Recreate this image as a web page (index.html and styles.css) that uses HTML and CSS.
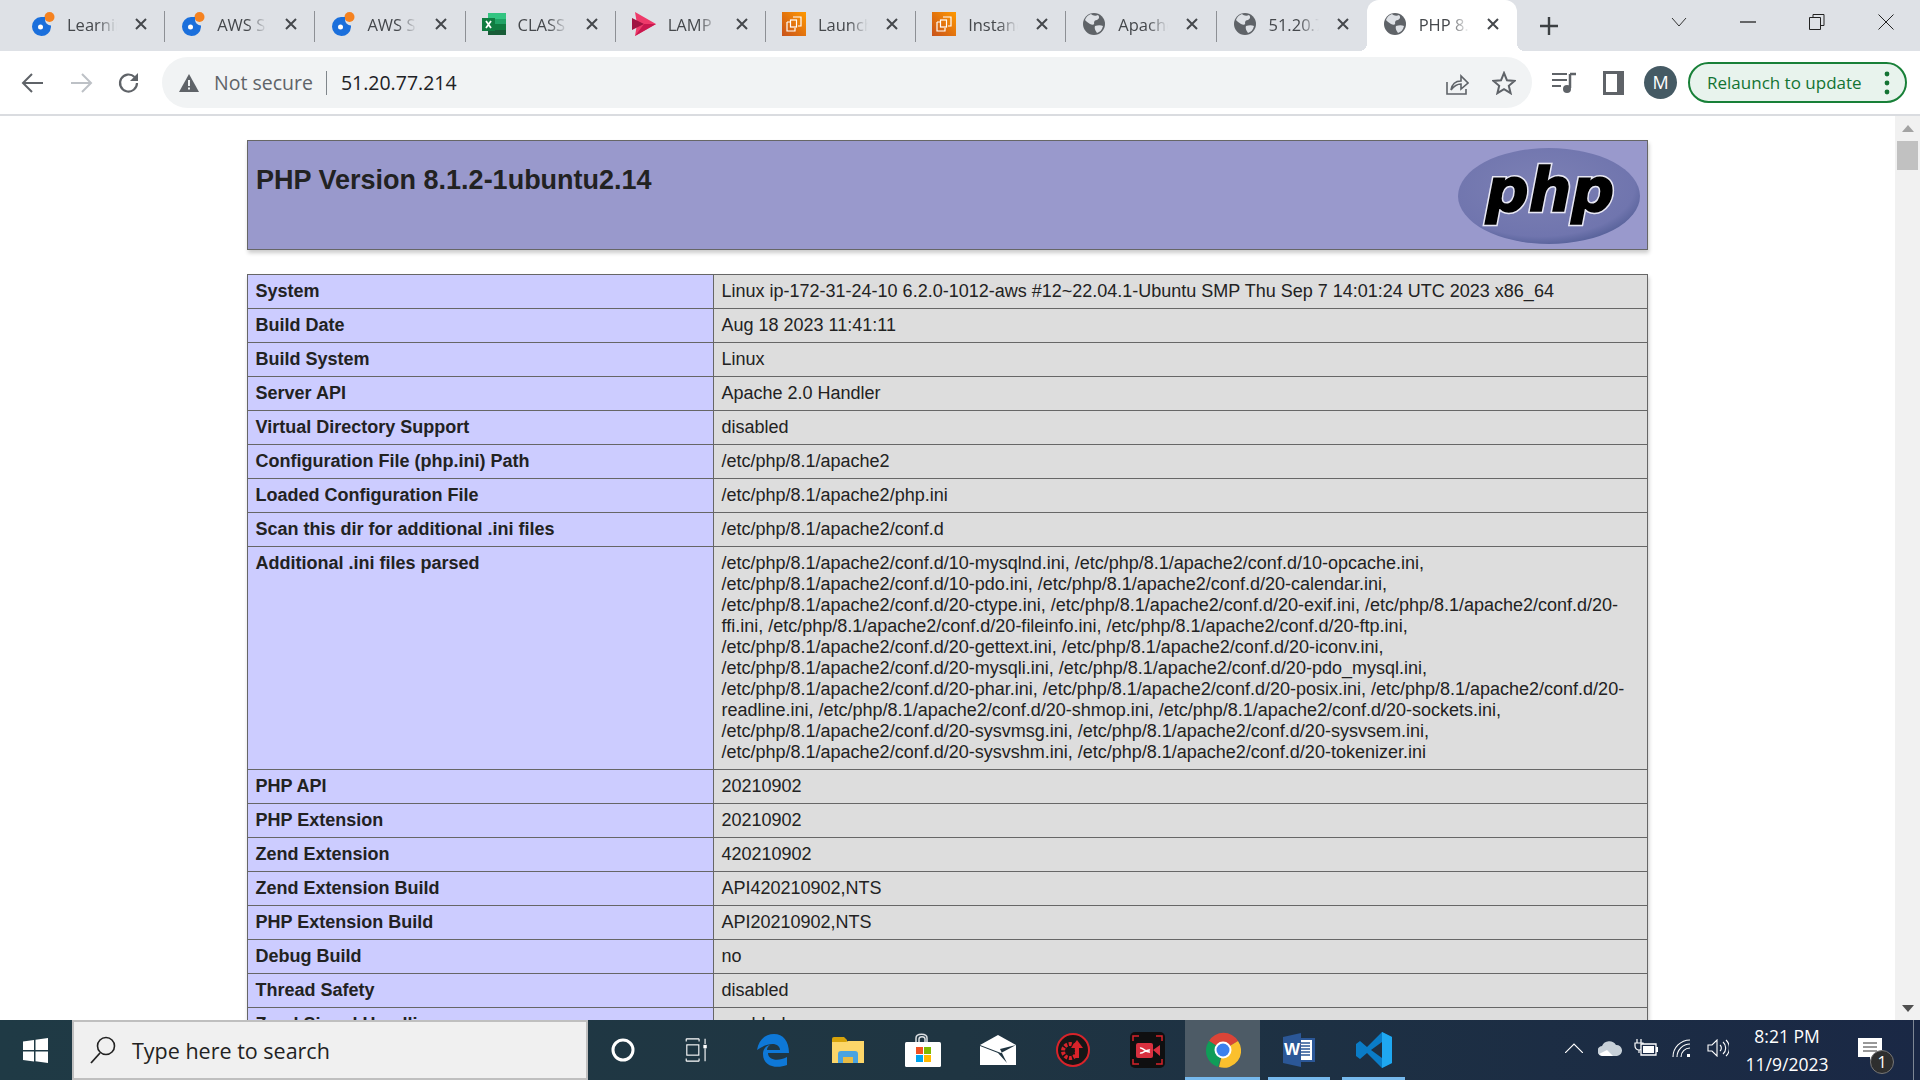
FILE: index.html
```html
<!DOCTYPE html>
<html>
<head>
<meta charset="utf-8">
<title>PHP 8.1.2-1ubuntu2.14 - phpinfo()</title>
<link rel="stylesheet" href="styles.css">
</head>
<body>

<svg class="defs" width="0" height="0">
	<defs>
		<linearGradient id="awsGrad" x1="0" y1="1" x2="1" y2="0">
			<stop offset="0" stop-color="#c8511b"/>
			<stop offset="1" stop-color="#ff9900"/>
		</linearGradient>
	</defs>
	<symbol id="fav-learn" viewBox="0 0 24 24">
		<circle cx="18.500" cy="5" r="5" fill="#f58220"/>
		<path d="M10 5a9.500 9.500 0 1 0 10 10v-1.500a6 6 0 0 1-6-6V5z" fill="#1a6fdc"/>
		<circle cx="9.500" cy="15" r="2.500" fill="#fff"/>
	</symbol>
	<symbol id="fav-aws" viewBox="0 0 24 24">
		<rect width="24" height="24" fill="url(#awsGrad)"/>
		<g fill="none" stroke="#fff" stroke-width="1.200">
			<path d="M11 5h8v9h-3M5 10h3M5 10v9h8v-3"/>
			<rect x="8.500" y="8" width="6" height="7"/>
		</g>
	</symbol>
	<symbol id="fav-globe" viewBox="0 0 24 24">
		<circle cx="12" cy="12" r="11" fill="#5f6368"/>
		<path d="M9 2c2 2 5 2 7 1c2 2 1 4-1 5c-2 0-3 1-3 3c1 2-2 2-4 1c-2-1-4-3-5-4c1-3 3-5 6-6zM13 14c3-1 6-1 8 0c-1 4-3 6-6 7c-1-2-3-4-2-7z" fill="#dee1e6"/>
	</symbol>
	<symbol id="tab-x" viewBox="0 0 14 14">
		<path d="M2 2l10 10M12 2L2 12" stroke="#45484c" stroke-width="2" fill="none"/>
	</symbol>
</svg>

<div class="tabstrip">
	<div class="tab">
		<svg class="fav"><use href="#fav-learn"/></svg>
		<span class="tabTitle">Learning</span>
		<svg class="tabClose"><use href="#tab-x"/></svg>
	</div>
	<div class="tab">
		<svg class="fav"><use href="#fav-learn"/></svg>
		<span class="tabTitle">AWS Skill</span>
		<svg class="tabClose"><use href="#tab-x"/></svg>
	</div>
	<div class="tab">
		<svg class="fav"><use href="#fav-learn"/></svg>
		<span class="tabTitle">AWS Skill</span>
		<svg class="tabClose"><use href="#tab-x"/></svg>
	</div>
	<div class="tab">
		<svg class="fav" viewBox="0 0 24 22">
			<rect x="6" y="0" width="18" height="22" fill="#21a366"/>
			<rect x="6" y="0" width="18" height="6" fill="#33c481"/>
			<rect x="6" y="11" width="18" height="6" fill="#107c41"/>
			<rect x="6" y="17" width="18" height="5" fill="#185c37"/>
			<rect x="0" y="5" width="13" height="13" fill="#107c41"/>
			<path d="M4 8l5 7M9 8l-5 7" stroke="#fff" stroke-width="1.800"/>
		</svg>
		<span class="tabTitle">CLASS</span>
		<svg class="tabClose"><use href="#tab-x"/></svg>
	</div>
	<div class="tab">
		<svg class="fav" viewBox="0 0 24 24">
			<path d="M3 0l21 12l-21 12l2-12z" fill="#ee3a6a"/>
			<path d="M0 6l12 6l-12 6z" fill="#a01442"/>
			<path d="M3 24l21-12h-12z" fill="#c9184f"/>
		</svg>
		<span class="tabTitle">LAMP</span>
		<svg class="tabClose"><use href="#tab-x"/></svg>
	</div>
	<div class="tab">
		<svg class="fav"><use href="#fav-aws"/></svg>
		<span class="tabTitle">Launch</span>
		<svg class="tabClose"><use href="#tab-x"/></svg>
	</div>
	<div class="tab">
		<svg class="fav"><use href="#fav-aws"/></svg>
		<span class="tabTitle">Instance</span>
		<svg class="tabClose"><use href="#tab-x"/></svg>
	</div>
	<div class="tab">
		<svg class="fav"><use href="#fav-globe"/></svg>
		<span class="tabTitle">Apache</span>
		<svg class="tabClose"><use href="#tab-x"/></svg>
	</div>
	<div class="tab noSep">
		<svg class="fav"><use href="#fav-globe"/></svg>
		<span class="tabTitle">51.20.77</span>
		<svg class="tabClose"><use href="#tab-x"/></svg>
	</div>
	<div class="tab active">
		<svg class="fav"><use href="#fav-globe"/></svg>
		<span class="tabTitle">PHP 8.1</span>
		<svg class="tabClose"><use href="#tab-x"/></svg>
	</div>
	<svg class="newTab" width="20" height="20" viewBox="0 0 20 20"><path d="M10 1v18M1 10h18" stroke="#3c4043" stroke-width="2.400"/></svg>
	<div class="winBtns">
		<svg width="16" height="10" viewBox="0 0 16 10"><path d="M1 1l7 8l7-8" stroke="#333" fill="none"/></svg>
		<svg width="16" height="2" viewBox="0 0 16 2"><path d="M0 1h16" stroke="#222" stroke-width="1.300"/></svg>
		<svg width="16" height="16" viewBox="0 0 16 16"><path d="M4 3.500V.5h11v11h-3M.5 3.500h11v12H.5z" stroke="#222" fill="none"/></svg>
		<svg width="16" height="16" viewBox="0 0 16 16"><path d="M.5.5l15 15M15.500.5l-15 15" stroke="#222" fill="none"/></svg>
	</div>
</div>

<div class="toolbar">
	<svg class="navBtn" width="24" height="24" viewBox="0 0 24 24"><path d="M22 12H3M11 3l-9 9l9 9" stroke="#5f6368" stroke-width="2" fill="none"/></svg>
	<svg class="navBtn" width="24" height="24" viewBox="0 0 24 24"><path d="M2 12h19M13 3l9 9l-9 9" stroke="#bdc1c6" stroke-width="2" fill="none"/></svg>
	<svg class="navBtn" width="24" height="24" viewBox="0 0 24 24"><path d="M20 12a8.500 8.500 0 1 1-2.500-6" stroke="#5f6368" stroke-width="2.200" fill="none"/><path d="M21 2v8h-8z" fill="#5f6368"/></svg>
	<div class="omnibox">
		<svg width="20" height="18" viewBox="0 0 20 18"><path d="M10 0l10 18H0z" fill="#5f6368"/><path d="M10 6v6M10 13.500v2" stroke="#f1f3f4" stroke-width="2"/></svg>
		<span class="notSecure">Not secure</span>
		<span class="urlSep"></span>
		<span class="url">51.20.77.214</span>
		<svg class="share" width="24" height="24" viewBox="0 0 24 24"><path d="M2 11v12h19v-5" stroke="#5f6368" stroke-width="1.600" fill="none"/><path d="M6 19c1-6 5-9 10-9V5l7 7l-7 6v-5c-4 0-7 2-10 6z" stroke="#5f6368" stroke-width="1.600" fill="none"/></svg>
		<svg width="24" height="24" viewBox="0 0 24 24"><path d="M12 2l3 7.300l7.500.6l-5.700 4.900l1.800 7.400L12 18.200L5.400 22.200l1.800-7.400L1.500 9.900L9 9.300z" stroke="#5f6368" stroke-width="2" fill="none"/></svg>
	</div>
	<svg class="music" width="24" height="22" viewBox="0 0 24 22"><path d="M0 2h15M0 8h15M0 14h9" stroke="#5f6368" stroke-width="2"/><path d="M18 2h6M18 2v14" stroke="#5f6368" stroke-width="2.500"/><circle cx="15" cy="17" r="4" fill="#5f6368"/></svg>
	<svg class="panel" width="21" height="24" viewBox="0 0 21 24"><path d="M0 0h21v24H0z" fill="#5f6368"/><path d="M3 3h11v18H3z" fill="#fff"/></svg>
	<div class="avatar">M</div>
	<div class="relaunch">
		<span>Relaunch to update</span>
		<svg width="6" height="24" viewBox="0 0 6 24"><circle cx="3" cy="3" r="2.400" fill="#137333"/><circle cx="3" cy="12" r="2.400" fill="#137333"/><circle cx="3" cy="21" r="2.400" fill="#137333"/></svg>
	</div>
</div>

<div class="viewport">
	<div class="page">
		<div class="phpHead">
			<h1>PHP Version 8.1.2-1ubuntu2.14</h1>
			<svg class="phpLogo" width="184" height="98" viewBox="0 0 184 98">
				<defs>
					<radialGradient id="logoGrad" cx="45%" cy="40%" r="65%">
						<stop offset="0" stop-color="#7c80b4"/>
						<stop offset="0.8" stop-color="#7075ae"/>
						<stop offset="1" stop-color="#4f5b93"/>
					</radialGradient>
				</defs>
				<ellipse cx="92" cy="49" rx="91" ry="48" fill="url(#logoGrad)"/>
				<text class="logoText logoHalo" x="93" y="64" text-anchor="middle">php</text>
				<text class="logoText" x="93" y="64" text-anchor="middle">php</text>
			</svg>
		</div>
		<table class="info">
			<tr><td class="key">System</td><td class="val">Linux ip-172-31-24-10 6.2.0-1012-aws #12~22.04.1-Ubuntu SMP Thu Sep 7 14:01:24 UTC 2023 x86_64</td></tr>
			<tr><td class="key">Build Date</td><td class="val">Aug 18 2023 11:41:11</td></tr>
			<tr><td class="key">Build System</td><td class="val">Linux</td></tr>
			<tr><td class="key">Server API</td><td class="val">Apache 2.0 Handler</td></tr>
			<tr><td class="key">Virtual Directory Support</td><td class="val">disabled</td></tr>
			<tr><td class="key">Configuration File (php.ini) Path</td><td class="val">/etc/php/8.1/apache2</td></tr>
			<tr><td class="key">Loaded Configuration File</td><td class="val">/etc/php/8.1/apache2/php.ini</td></tr>
			<tr><td class="key">Scan this dir for additional .ini files</td><td class="val">/etc/php/8.1/apache2/conf.d</td></tr>
			<tr><td class="key">Additional .ini files parsed</td><td class="val">/etc/php/8.1/apache2/conf.d/10-mysqlnd.ini, /etc/php/8.1/apache2/conf.d/10-opcache.ini, /etc/php/8.1/apache2/conf.d/10-pdo.ini, /etc/php/8.1/apache2/conf.d/20-calendar.ini, /etc/php/8.1/apache2/conf.d/20-ctype.ini, /etc/php/8.1/apache2/conf.d/20-exif.ini, /etc/php/8.1/apache2/conf.d/20-ffi.ini, /etc/php/8.1/apache2/conf.d/20-fileinfo.ini, /etc/php/8.1/apache2/conf.d/20-ftp.ini, /etc/php/8.1/apache2/conf.d/20-gettext.ini, /etc/php/8.1/apache2/conf.d/20-iconv.ini, /etc/php/8.1/apache2/conf.d/20-mysqli.ini, /etc/php/8.1/apache2/conf.d/20-pdo_mysql.ini, /etc/php/8.1/apache2/conf.d/20-phar.ini, /etc/php/8.1/apache2/conf.d/20-posix.ini, /etc/php/8.1/apache2/conf.d/20-readline.ini, /etc/php/8.1/apache2/conf.d/20-shmop.ini, /etc/php/8.1/apache2/conf.d/20-sockets.ini, /etc/php/8.1/apache2/conf.d/20-sysvmsg.ini, /etc/php/8.1/apache2/conf.d/20-sysvsem.ini, /etc/php/8.1/apache2/conf.d/20-sysvshm.ini, /etc/php/8.1/apache2/conf.d/20-tokenizer.ini</td></tr>
			<tr><td class="key">PHP API</td><td class="val">20210902</td></tr>
			<tr><td class="key">PHP Extension</td><td class="val">20210902</td></tr>
			<tr><td class="key">Zend Extension</td><td class="val">420210902</td></tr>
			<tr><td class="key">Zend Extension Build</td><td class="val">API420210902,NTS</td></tr>
			<tr><td class="key">PHP Extension Build</td><td class="val">API20210902,NTS</td></tr>
			<tr><td class="key">Debug Build</td><td class="val">no</td></tr>
			<tr><td class="key">Thread Safety</td><td class="val">disabled</td></tr>
			<tr><td class="key">Zend Signal Handling</td><td class="val">enabled</td></tr>
		</table>
	</div>
	<div class="scrollbar">
		<span class="arrowUp"></span>
		<span class="thumb"></span>
		<span class="arrowDown"></span>
	</div>
</div>

<div class="taskbar">
	<svg class="winLogo" width="25" height="25" viewBox="0 0 25 25"><path d="M0 3.500l11-1.500v10H0zM12.500 1.800L25 0v12H12.500zM0 13.500h11v10L0 22zM12.500 13.500H25V25l-12.500-1.800z" fill="#fff"/></svg>
	<div class="search">
		<svg width="26" height="30" viewBox="0 0 26 30"><circle cx="16" cy="11" r="8.500" stroke="#222" stroke-width="1.600" fill="none"/><path d="M10 18L1 28" stroke="#222" stroke-width="1.800"/></svg>
		<span>Type here to search</span>
	</div>
	<div class="apps">
		<div class="app"><svg width="24" height="24" viewBox="0 0 24 24"><circle cx="12" cy="12" r="10" stroke="#fff" stroke-width="3" fill="none"/></svg></div>
		<div class="app taskView"><svg width="23" height="24" viewBox="0 0 24 28"><path d="M0 1h15M0 27h15M0 1v3M15 1v3M0 27v-3M15 27v-3" stroke="#fff" stroke-width="1.300" fill="none"/><rect x="0.700" y="8" width="14" height="12" stroke="#fff" stroke-width="1.300" fill="none"/><path d="M22 1v6M22 12v15" stroke="#fff" stroke-width="1.300"/><rect x="20" y="8" width="4" height="4" fill="#fff"/></svg></div>
		<div class="app"><svg width="32" height="33" viewBox="0 0 32 33"><path d="M0 16C2 5 9 0 17 0c9 0 15 7 15 19H11c0 7 10 9 19 4v8c-10 4-24 2-24-11c0-4 2-8 7-9c-2 1-3 3-3 5h13c0-6-9-10-23 0z" fill="#0e78d7"/></svg></div>
		<div class="app"><svg width="32" height="28" viewBox="0 0 32 28"><path d="M0 3a2 2 0 0 1 2-2h10l3 3v22H0z" fill="#d7a30a"/><path d="M0 6h14l2-1h16v22H0z" fill="#fcd669"/><path d="M6 27V18a3 3 0 0 1 3-3h14a3 3 0 0 1 3 3v9h-5v-6H11v6z" fill="#4aa3e0"/><path d="M11 21h10v6H11z" fill="#e8bc45"/></svg></div>
		<div class="app"><svg width="36" height="34" viewBox="0 0 36 34"><path d="M11 11V5c0-5 11-5 11 0v6M14 11V6c0-3 6-3 6 0v5" stroke="#dcdfe2" stroke-width="1.500" fill="none"/><rect y="9" width="36" height="25" rx="1.500" fill="#fff"/><rect x="11" y="14" width="7" height="7" fill="#f25022"/><rect x="19" y="14" width="7" height="7" fill="#7fba00"/><rect x="11" y="22" width="7" height="7" fill="#00a4ef"/><rect x="19" y="22" width="7" height="7" fill="#ffb900"/></svg></div>
		<div class="app"><svg width="36" height="30" viewBox="0 0 36 30"><path d="M0 10L18 0l18 10v20H0z" fill="#fff"/><path d="M0 10l21 8l15-8l-16 4l7 14l-9-10L0 11z" fill="#1f3440"/></svg></div>
		<div class="app"><svg width="34" height="34" viewBox="0 0 34 34"><circle cx="17" cy="17" r="16" fill="#161616" stroke="#d8232a" stroke-width="2"/><circle cx="14" cy="18" r="7" fill="none" stroke="#d8232a" stroke-width="4" stroke-dasharray="3 1.500"/><path d="M21 7l6 8h-4v10h-4V15h-4z" fill="#d8232a"/></svg></div>
		<div class="app"><svg width="35" height="36" viewBox="0 0 35 36"><rect width="35" height="36" rx="5" fill="#0f0f10"/><path d="M3 9V4h6M26 4h6v5M3 27v5h6M32 27v5h-6" stroke="#d8232a" stroke-width="1.500" fill="none"/><rect x="6" y="11" width="17" height="15" rx="2" fill="#d9303f"/><path d="M23 18l7-5v11z" fill="#d9303f"/><path d="M10 16c3-1 6 5 10 4M10 21c3 1 6-4 10-3" stroke="#fff" stroke-width="1.500" fill="none"/></svg></div>
		<div class="app current"><svg width="36" height="36" viewBox="0 0 36 36"><path d="M18 18L4 9A17 17 0 0 1 33 9z" fill="#db4437"/><path d="M18 18L4 9A17 17 0 0 0 13 35z" fill="#0f9d58"/><path d="M18 18l15-9A17 17 0 0 1 14 35z" fill="#fbc02d"/><circle cx="18" cy="18" r="8.500" fill="#fff"/><circle cx="18" cy="18" r="6.500" fill="#3c80ee"/></svg></div>
		<div class="app open"><svg width="32" height="34" viewBox="0 0 32 34"><path d="M11 5h21v24H11z" fill="#2b5797"/><path d="M14 7h15v20H14z" fill="#fff"/><path d="M17 10h10M17 13h10M17 16h10M17 19h10M17 22h10" stroke="#2b5797" stroke-width="1.500"/><path d="M0 4l18-4v34L0 30z" fill="#2b5797"/><text class="wordW" x="9" y="22" text-anchor="middle">W</text></svg></div>
		<div class="app open"><svg width="36" height="36" viewBox="0 0 36 36"><path d="M26 0l10 5v26l-10 5L11 21l-7 6l-4-3v-12l4-3l7 6z" fill="#0a7cc7"/><path d="M26 0l10 5v26l-10 5z" fill="#1fa8f1"/><path d="M26 10L15 18l11 8z" fill="#1f2f40"/></svg></div>
	</div>
	<div class="tray">
		<div class="trayIcon"><svg width="18" height="10" viewBox="0 0 18 10"><path d="M0 10l9-9l9 9" stroke="#fff" fill="none" stroke-width="1.200"/></svg></div>
		<div class="trayIcon"><svg width="24" height="16" viewBox="0 0 24 16"><path d="M5 16a5 5 0 0 1-1-10a8 8 0 0 1 14-1a5.500 5.500 0 0 1 1 11z" fill="#c7d0d8"/><path d="M1 14l8-4l6 6H4z" fill="#fff"/></svg></div>
		<div class="trayIcon"><svg width="24" height="18" viewBox="0 0 24 18"><path d="M3 0v4M7 0v4M1 4h8v3a4 4 0 0 1-8 0zM5 11v3" stroke="#fff" fill="none" stroke-width="1.200"/><path d="M7 5h15v11H7z" stroke="#fff" stroke-width="1.300" fill="#1b2a45"/><rect x="9" y="7" width="11" height="7" fill="#fff"/><rect x="22" y="8" width="2" height="5" fill="#fff"/></svg></div>
		<div class="trayIcon"><svg width="20" height="18" viewBox="0 0 20 18"><path d="M1 18A17 17 0 0 1 18 1M5 18A13 13 0 0 1 18 5M9 18a9 9 0 0 1 9-9" stroke="#fff" fill="none" stroke-width="1.100"/><rect x="15" y="15" width="3" height="3" fill="#fff"/></svg></div>
		<div class="trayIcon"><svg width="22" height="18" viewBox="0 0 22 18"><path d="M1 6h4l5-5v16l-5-5H1z" stroke="#fff" fill="none" stroke-width="1.100"/><path d="M13 6a4 4 0 0 1 0 6M16 3a8 8 0 0 1 0 12M19 1a11 11 0 0 1 0 16" stroke="#fff" fill="none" stroke-width="1.100"/></svg></div>
	</div>
	<div class="clock">
		<span>8:21 PM</span>
		<span>11/9/2023</span>
	</div>
	<div class="notify">
		<svg width="24" height="24" viewBox="0 0 24 24"><path d="M0 0h24v19H14l-2 4v-4H0z" fill="#fff"/><path d="M5 5h14M5 9h14M5 13h14" stroke="#333" stroke-width="1"/></svg>
		<span class="badge">1</span>
	</div>
</div>

</body>
</html>
```

FILE: styles.css
```css
/* reset start */
html,body{ height:100%; overflow:hidden;}
body{ margin:0; display:flex; flex-direction:column; background:#fff; font-family:"Open Sans","Noto Sans",sans-serif;}
h1{ margin:0;}
.defs{ position:absolute;}
/* reset end */

/* tabs start */
.tabstrip{ height:51px; background:#dee1e6; display:flex; padding-left:15px; flex:none;}
.tab{ width:150.2px; box-sizing:border-box; display:flex; align-items:center; padding:0 14px 3px 16px; position:relative; font-size:16.500px; color:#45484c;}
.tab:after{ content:""; position:absolute; right:0; top:11px; height:31px; width:1px; background:#8d9095;}
.tab.noSep:after{ display:none;}
.tab.active{ background:#fff; border-radius:12px 12px 0 0;}
.tab.active:before,.tab.active:after{ content:""; display:block; position:absolute; bottom:0; top:auto; right:auto; width:8px; height:8px; background:radial-gradient(circle at 0 0,transparent 8px,#fff 8px);}
.tab.active:before{ left:-8px;}
.tab.active:after{ right:-8px; background:radial-gradient(circle at 100% 0,transparent 8px,#fff 8px);}
.fav{ width:24px; height:24px; flex:none;}
.tabTitle{ width:50px; margin-left:12px; white-space:nowrap; overflow:hidden; -webkit-mask-image:linear-gradient(to right,#000 60%,transparent 100%); mask-image:linear-gradient(to right,#000 60%,transparent 100%);}
.tabClose{ width:14px; height:14px; margin-left:17px; flex:none;}
.newTab{ align-self:center; margin:0 0 0 22px; flex:none;}
.winBtns{ margin-left:auto; display:flex; align-items:center; gap:53px; padding:0 26px 8px 0;}
/* tabs end */

/* toolbar start */
.toolbar{ height:65px; box-sizing:border-box; background:#fff; border-bottom:2px solid #dadce0; display:flex; align-items:center; padding:0 13px 0 21px; flex:none;}
.navBtn{ margin-right:24px; flex:none;}
.navBtn:nth-child(3){ margin-right:21px;}
.omnibox{ width:1370px; height:51px; box-sizing:border-box; border-radius:26px; background:#f1f3f4; display:flex; align-items:center; padding:0 16px 0 17px; flex:none;}
.notSecure{ margin-left:15px; font-size:19.500px; color:#5f6368;}
.urlSep{ width:1px; height:24px; background:#80868b; margin:0 14px 0 13px;}
.url{ font-size:19.500px; color:#202124;}
.share{ margin-left:auto; margin-right:23px;}
.music{ margin-left:20px;}
.panel{ margin-left:27px;}
.avatar{ width:33px; height:33px; border-radius:50%; background:#455a64; color:#fff; font-size:18px; line-height:33px; text-align:center; margin-left:20px; flex:none;}
.relaunch{ margin-left:11px; width:219px; height:41px; box-sizing:border-box; border:2px solid #188038; border-radius:21px; background:#e8f3ed; display:flex; align-items:center; justify-content:space-between; padding:0 15px 0 17px; font-size:17px; color:#137333;}
/* toolbar end */

/* php page start */
.viewport{ flex:1; min-height:0; display:flex; overflow:hidden;}
.page{ flex:1; padding-top:24px; font:18px/21px "Liberation Sans",Arial,sans-serif; color:#222;}
.phpHead{ width:1401px; height:110px; box-sizing:border-box; margin:0 auto 24px; border:1px solid #666; background:#99c; box-shadow:1px 3px 4px #ccc; display:flex; justify-content:space-between; padding:6px 6px 0 8px;}
.phpHead h1{ font-size:27px; line-height:52px; font-weight:bold; margin-top:7px;}
.phpLogo{ flex:none;}
.logoText{ font:italic bold 60px "DejaVu Sans",sans-serif; fill:#000; stroke:#000; stroke-width:1.500px;}
.logoHalo{ fill:#fff; stroke:#e8e8f4; stroke-width:4.500px;}
.info{ width:1401px; margin:0 auto; border-collapse:collapse; box-shadow:1px 3px 4px #ccc;}
.info td{ border:1px solid #666; padding:6px 7.500px; vertical-align:top;}
.key{ width:450px; background:#ccf; font-weight:bold;}
.val{ background:#ddd;}
/* php page end */

/* scrollbar start */
.scrollbar{ width:25px; background:#f1f1f1; flex:none; display:flex; flex-direction:column; align-items:center;}
.arrowUp{ margin-top:9px; border:6px solid transparent; border-top:0; border-bottom:7px solid #a3a3a3;}
.thumb{ width:21px; height:29px; background:#c1c1c1; margin-top:9px;}
.arrowDown{ margin-top:auto; margin-bottom:8px; border:6px solid transparent; border-bottom:0; border-top:7px solid #505050;}
/* scrollbar end */

/* taskbar start */
.taskbar{ height:60px; background:linear-gradient(to right,#1f3a45,#1f3542 50%,#1a2845); display:flex; align-items:center; color:#fff; flex:none;}
.winLogo{ margin:0 24px 0 23px; flex:none;}
.search{ width:516px; height:60px; box-sizing:border-box; border:2px solid #bfbfbf; background:#f0f0f0; display:flex; align-items:center; padding-left:16px; font-size:21.500px; color:#222; flex:none;}
.search span{ margin-left:16px;}
.apps{ display:flex; height:60px; margin-left:-2px;}
.app{ width:74.900px; height:60px; display:flex; align-items:center; justify-content:center; position:relative;}
.taskView svg{ margin-right:4px;}
.app.current{ background:#4d5b66; margin-right:1.500px;}
.app.current:after,.app.open:after{ content:""; position:absolute; left:6px; right:6px; bottom:0; height:3px; background:#76b9ed;}
.app.current:after{ left:0; right:0;}
.wordW{ font:bold 17px "Liberation Sans",sans-serif; fill:#fff;}
.tray{ display:flex; align-items:center; margin-left:auto; padding-bottom:4px;}
.trayIcon{ width:36px; display:flex; justify-content:center;}
.clock{ width:102px; display:flex; flex-direction:column; align-items:center; font-size:17.500px; line-height:28px;}
.notify{ width:82px; height:60px; position:relative; display:flex; padding:18px 0 0 20px; box-sizing:border-box;}
.notify:after{ content:""; position:absolute; right:6px; top:0; bottom:0; width:1px; background:#7d8794;}
.badge{ position:absolute; left:32px; top:30px; width:24px; height:24px; border-radius:50%; background:#2e2e2e; border:1px solid #777; box-sizing:border-box; text-align:center; font-size:16px; line-height:22px;}
/* taskbar end */
```
